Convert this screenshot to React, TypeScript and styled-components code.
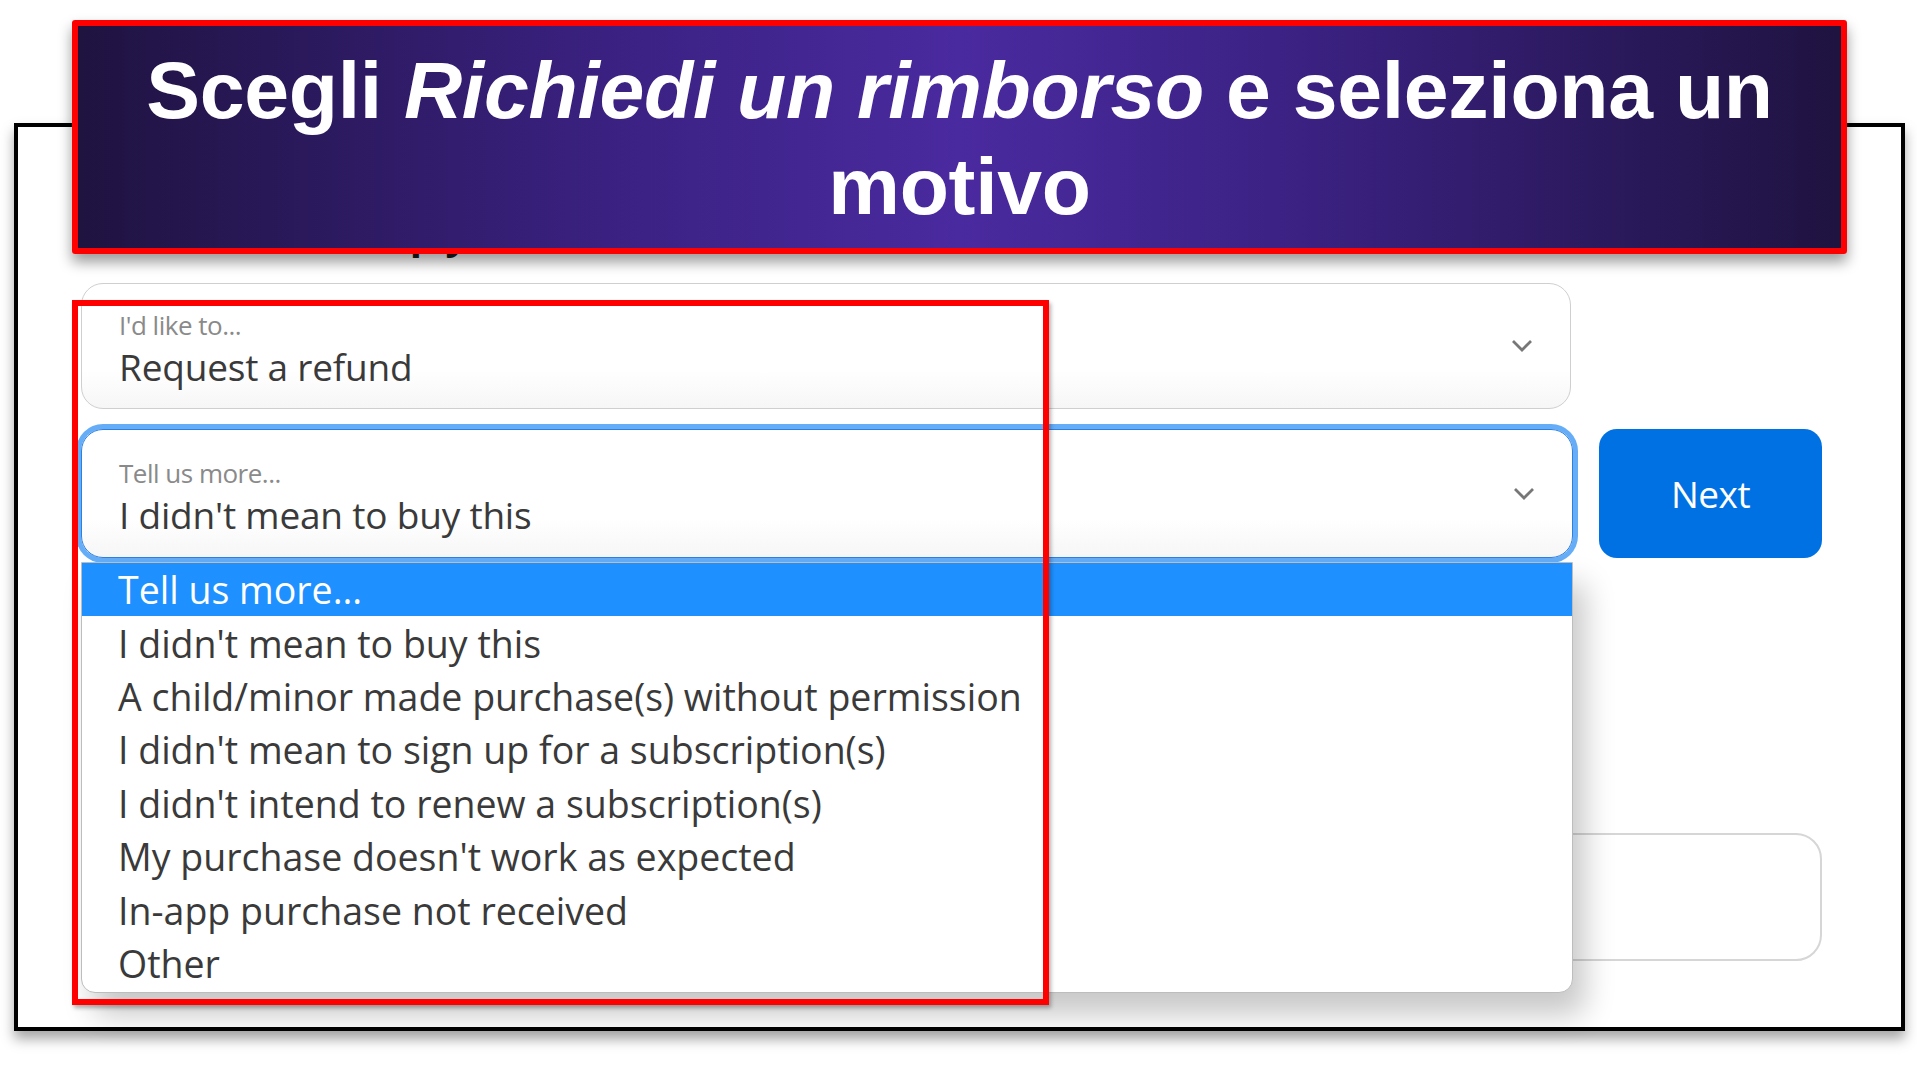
import styled, { createGlobalStyle } from 'styled-components'

const GlobalStyle = createGlobalStyle`
  html, body {
    margin: 0;
    padding: 0;
    background: #ffffff;
  }
  body {
    font-family: 'Open Sans', 'Noto Sans', sans-serif;
    color: #333;
  }
`

const Page = styled.div`
  position: relative;
  width: 1917px;
  height: 1076px;
  overflow: hidden;
  padding-top: 123px;
  box-sizing: border-box;
`

const Frame = styled.div`
  margin-left: 14px;
  width: 1891px;
  height: 908px;
  box-sizing: border-box;
  border: 4px solid #000;
  background: #fff;
  box-shadow: 0 8px 12px rgba(0, 0, 0, 0.35);
  padding: 82px 0 0 63px;
  display: flex;
  flex-direction: column;
`

const Heading = styled.h1`
  margin: 0 0 24px;
  font-family: 'Open Sans', sans-serif;
  font-weight: 700;
  font-size: 40px;
  line-height: 50px;
  color: #1d1d1f;
`

const Row = styled.div`
  display: flex;
  align-items: stretch;
  gap: 26px;
  margin-bottom: 20px;
`

const SelectWrap = styled.div`
  position: relative;
`

const Select = styled.div<{ $focused?: boolean; $w: number; $h: number }>`
  width: ${(p) => p.$w}px;
  height: ${(p) => p.$h}px;
  box-sizing: border-box;
  border-radius: 22px;
  border: 1px solid ${(p) => (p.$focused ? '#2d7fe0' : '#cfcfcf')};
  box-shadow: ${(p) => (p.$focused ? '0 0 0 5px #65adf7' : 'none')};
  background: linear-gradient(#fff 70%, #f6f6f6);
  padding: ${(p) => (p.$focused ? '27px' : '25px')} 60px 0 37px;
  display: flex;
  flex-direction: column;
  position: relative;
`

const Label = styled.span`
  font-size: 26px;
  line-height: 32px;
  color: #8a8a8a;
  letter-spacing: -0.5px;
`

const Value = styled.span`
  font-size: 37px;
  line-height: 52px;
  color: #3a3a3a;
  letter-spacing: -0.2px;
`

const Chevron = styled.svg`
  position: absolute;
  right: 36px;
  top: 50%;
  margin-top: -8px;
`

const NextButton = styled.button`
  width: 223px;
  height: 129px;
  border: none;
  border-radius: 18px;
  background: #0071e3;
  color: #fff;
  font-family: 'Open Sans', sans-serif;
  font-size: 37px;
  letter-spacing: -0.5px;
  align-self: flex-start;
`

const Menu = styled.ul`
  position: absolute;
  left: 0;
  right: 0;
  top: calc(100% + 4px);
  margin: 0;
  padding: 0 0 2px;
  list-style: none;
  background: #fff;
  border-radius: 0 0 14px 14px;
  border: 1px solid #bdbdbd;
  box-shadow: 12px 22px 30px rgba(0, 0, 0, 0.22);
  overflow: hidden;
  z-index: 2;
`

const Option = styled.li<{ $active?: boolean }>`
  height: 53.4px;
  display: flex;
  align-items: center;
  padding-left: 36px;
  font-size: 37.5px;
  letter-spacing: 0;
  color: ${(p) => (p.$active ? '#fff' : '#3a3a3a')};
  background: ${(p) => (p.$active ? '#1e90ff' : 'transparent')};
`

const Spacer = styled.div`
  height: 255px;
`

const TextBox = styled.div`
  width: 1741px;
  height: 128px;
  box-sizing: border-box;
  border: 2px solid #d6d6d6;
  border-radius: 26px;
`

const Banner = styled.div`
  position: absolute;
  left: 72px;
  top: 20px;
  width: 1775px;
  height: 234px;
  box-sizing: border-box;
  border: 6px solid #ff0000;
  border-radius: 3px;
  background: linear-gradient(90deg, #1f1340 0%, #3a2181 30%, #4a2a9f 50%, #3a2181 70%, #1f1340 100%);
  box-shadow: 0 8px 14px rgba(0, 0, 0, 0.4);
  z-index: 5;
  display: flex;
  align-items: center;
  justify-content: center;
  text-align: center;
  padding: 2px 40px 0;
`

const BannerText = styled.h2`
  margin: 0;
  font-family: 'Liberation Sans', Arial, sans-serif;
  font-weight: 700;
  font-size: 80.6px;
  line-height: 96px;
  color: #fff;
  letter-spacing: -0.3px;
`

const Highlight = styled.div`
  position: absolute;
  left: 72px;
  top: 300px;
  width: 977px;
  height: 705px;
  box-sizing: border-box;
  border: 6px solid #ff0000;
  box-shadow: 2px 3px 4px rgba(0, 0, 0, 0.3);
  z-index: 4;
  pointer-events: none;
`

const ChevronIcon = () => (
  <Chevron width="24" height="16" viewBox="0 0 24 16">
    <path d="M3 3 L12 12 L21 3" fill="none" stroke="#777" strokeWidth="2.8" />
  </Chevron>
)

const options = [
  'Tell us more...',
  "I didn't mean to buy this",
  'A child/minor made purchase(s) without permission',
  "I didn't mean to sign up for a subscription(s)",
  "I didn't intend to renew a subscription(s)",
  "My purchase doesn't work as expected",
  'In-app purchase not received',
  'Other',
]

export default function App() {
  return (
    <>
      <GlobalStyle />
      <Page>
        <Frame>
          <Heading>What can we help you with?</Heading>
          <Row>
            <Select $w={1490} $h={126}>
              <Label>I'd like to...</Label>
              <Value>Request a refund</Value>
              <ChevronIcon />
            </Select>
          </Row>
          <Row>
            <SelectWrap>
              <Select $focused $w={1492} $h={129}>
                <Label>Tell us more...</Label>
                <Value>I didn't mean to buy this</Value>
                <ChevronIcon />
              </Select>
              <Menu>
                {options.map((o, i) => (
                  <Option key={o} $active={i === 0}>
                    {o}
                  </Option>
                ))}
              </Menu>
            </SelectWrap>
            <NextButton>Next</NextButton>
          </Row>
          <Spacer />
          <TextBox />
        </Frame>
        <Banner>
          <BannerText>
            Scegli <i>Richiedi un rimborso</i> e seleziona un motivo
          </BannerText>
        </Banner>
        <Highlight />
      </Page>
    </>
  )
}
